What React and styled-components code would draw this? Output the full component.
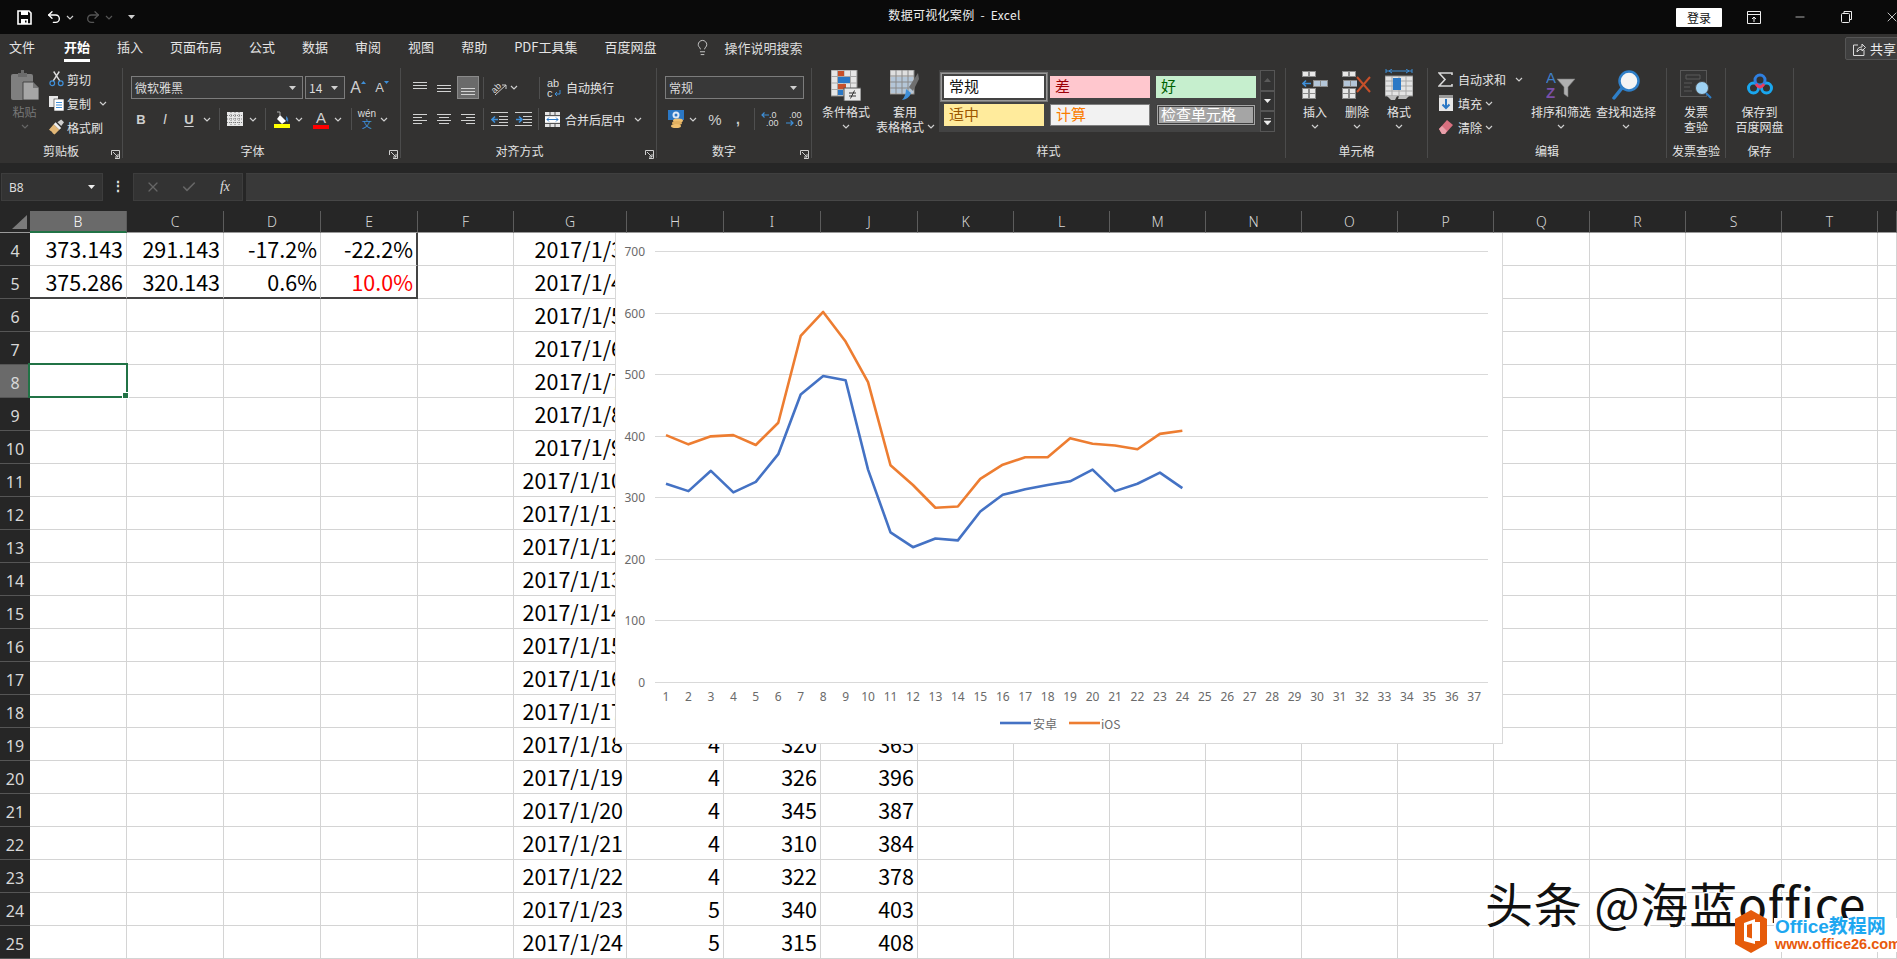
import React from 'react';
import styled, { createGlobalStyle } from 'styled-components';
import { Lightbulb, Undo2, Redo2, Minus, X, Check } from 'lucide-react';

const CJK = '"Noto Sans CJK SC", "Noto Sans", sans-serif';

const GlobalStyle = createGlobalStyle`
  html, body { margin: 0; padding: 0; background: #fff; }
  body { font-family: ${CJK}; overflow: hidden; }
`;

const Page = styled.div`
  position: relative;
  width: 100%;
  height: 959px;
  overflow: hidden;
  background: #262626;
`;

/* title bar */
const TitleBar = styled.div`
  display: grid;
  grid-template-columns: 1fr auto 1fr;
  align-items: center;
  height: 34px;
  background: #0a0a0a;
  color: #eee;
`;
const Row = styled.div`
  display: flex;
  align-items: center;
  height: ${(p) => p.$h || 24}px;
  margin-top: ${(p) => p.$mt || 0}px;
`;
const Tool = styled.div`
  flex: none;
  display: flex;
  align-items: center;
  justify-content: center;
  width: ${(p) => p.$w || 24}px;
  margin-left: ${(p) => p.$ml || 0}px;
  height: 100%;
  color: #d8d8d8;
`;
const Title = styled.div`
  padding: 0 0 6px 12px;
  font-size: 12px;
  letter-spacing: 0.3px;
  white-space: pre;
`;
const WindowControls = styled.div`
  display: flex;
  align-items: center;
  justify-content: flex-end;
  margin-right: -18px;
`;
const SignIn = styled.div`
  width: 46px;
  height: 19px;
  margin-right: 9px;
  background: #fff;
  color: #111;
  border-radius: 1px;
  font-size: 12px;
  line-height: 19px;
  text-align: center;
`;
const WinButton = styled.div`
  width: 46px;
  display: flex;
  justify-content: center;
  color: #eee;
`;

/* tabs */
const TabRow = styled.div`
  display: flex;
  align-items: flex-start;
  gap: 27px;
  height: 32px;
  padding-left: 9px;
  background: #333231;
`;
const Tab = styled.div`
  height: 28px;
  box-sizing: border-box;
  line-height: 26px;
  font-size: 13px;
  color: ${(p) => (p.$active ? '#fff' : '#e4e4e4')};
  font-weight: ${(p) => (p.$active ? 700 : 400)};
  border-bottom: 3px solid ${(p) => (p.$active ? '#fff' : 'transparent')};
  margin-left: ${(p) => p.$ml || 0}px;
  white-space: nowrap;
`;
const TellMe = styled.div`
  display: flex;
  align-items: center;
  gap: 14px;
  height: 26px;
  margin-left: 10px;
  font-size: 13px;
  color: #dcdcdc;
`;
const Share = styled.div`
  display: flex;
  align-items: center;
  gap: 4px;
  position: absolute;
  left: 1845px;
  top: 37px;
  width: 60px;
  height: 23px;
  padding-left: 7px;
  box-sizing: border-box;
  background: #3f3f3f;
  border: 1px solid #555;
  border-radius: 2px;
  font-size: 13px;
  color: #eee;
`;

/* ribbon */
const Ribbon = styled.div`
  display: flex;
  height: 97px;
  box-sizing: border-box;
  padding: 2px 0 5px;
  background: #333231;
`;
const Group = styled.div`
  flex: none;
  display: flex;
  flex-direction: column;
  width: ${(p) => p.$w}px;
  box-sizing: border-box;
  border-right: 1px solid #4b4b4b;
`;
const GroupBody = styled.div`
  flex: 1;
  display: flex;
  padding-left: ${(p) => p.$pl || 0}px;
  min-height: 0;
`;
const GroupLabel = styled.div`
  position: relative;
  height: 14px;
  line-height: 14px;
  margin-bottom: 0;
  font-size: 12px;
  color: #e2e2e2;
  text-align: center;
  padding-right: ${(p) => p.$pr || 0}px;
`;
const LauncherBox = styled.span`
  position: absolute;
  right: 2px;
  top: 6px;
  width: 9px;
  height: 9px;
  display: flex;
`;
const Stack = styled.div`
  flex: none;
  display: flex;
  flex-direction: column;
  width: ${(p) => (p.$w ? `${p.$w}px` : 'auto')};
  margin-left: ${(p) => p.$ml || 0}px;
  margin-top: ${(p) => p.$mt || 0}px;
`;
const SmallRow = styled.div`
  display: flex;
  align-items: center;
  height: 24px;
  margin-left: ${(p) => p.$ml || 0}px;
  font-size: 12px;
  color: #e4e4e4;
  white-space: nowrap;
`;
const SmallIcon = styled.span`
  flex: none;
  display: flex;
  align-items: center;
  justify-content: center;
  width: 15px;
  margin-right: ${(p) => p.$mr || 3}px;
`;
const Spacer = styled.span`
  flex: none;
  width: ${(p) => p.$w}px;
`;
const Large = styled.div`
  flex: none;
  display: flex;
  flex-direction: column;
  align-items: center;
  width: ${(p) => p.$w || 42}px;
  margin-left: ${(p) => p.$ml || 0}px;
  font-size: 12px;
  line-height: 15px;
  color: ${(p) => (p.$dim ? '#777' : '#e4e4e4')};
  white-space: nowrap;
`;
const LargeIcon = styled.div`
  display: flex;
  align-items: center;
  justify-content: center;
  height: 34px;
  margin-bottom: 2px;
`;
const TextLine = styled.div`
  display: flex;
  align-items: center;
  gap: 3px;
  height: 15px;
  margin-left: ${(p) => p.$ml || 0}px;
`;
const Select = styled.div`
  flex: none;
  display: flex;
  align-items: center;
  justify-content: space-between;
  box-sizing: border-box;
  width: ${(p) => p.$w}px;
  height: 23px;
  margin-left: ${(p) => p.$ml || 0}px;
  padding: 0 6px 0 3px;
  background: #383838;
  border: 1px solid #7c7c7c;
  font-size: 12px;
  color: #dcdcdc;
`;
const Sep = styled.span`
  flex: none;
  width: 1px;
  height: 22px;
  margin-left: ${(p) => p.$ml || 0}px;
  background: #4f4f4f;
`;
const Letter = styled.span`
  font-family: "Liberation Sans", sans-serif;
  font-size: ${(p) => p.$size || 13}px;
  font-weight: ${(p) => (p.$bold ? 700 : 400)};
  font-style: ${(p) => (p.$italic ? 'italic' : 'normal')};
  text-decoration: ${(p) => (p.$under ? 'underline' : 'none')};
  text-underline-offset: 2px;
  color: #cfcfcf;
`;
const SizeArrow = styled.svg`
  align-self: flex-start;
  margin-top: 5px;
`;
const ColorLetter = styled.div`
  display: flex;
  flex-direction: column;
  align-items: center;
  width: 16px;
  line-height: 15px;
  &::after {
    content: '';
    width: 16px;
    height: 4px;
    background: ${(p) => p.$bar};
  }
`;
const Phonetic = styled.div`
  display: flex;
  flex-direction: column;
  align-items: center;
  font-size: 10px;
  line-height: 10px;
  color: #ddd;
  font-family: "Liberation Sans", sans-serif;
  b {
    font-weight: 400;
    color: #3f8fd8;
    font-family: ${CJK};
  }
`;
const HighlightBox = styled.div`
  width: 22px;
  height: 23px;
  display: flex;
  align-items: center;
  justify-content: center;
  background: #6a6a6a;
  border: 1px solid #8a8a8a;
  box-sizing: border-box;
  margin-left: 1px;
`;
const Gallery = styled.div`
  flex: none;
  display: flex;
  height: 62px;
  margin: 2px 0 0 4px;
`;
const GalleryCells = styled.div`
  display: grid;
  grid-template-columns: repeat(3, 100px);
  grid-auto-rows: 22px;
  gap: 6px;
  width: 321px;
  box-sizing: border-box;
  padding: 6px 5px;
  background: #434343;
`;
const StyleCell = styled.div`
  box-sizing: border-box;
  padding-left: ${(p) => (p.$check ? 2 : 5)}px;
  font-size: 15px;
  line-height: ${(p) => (p.$check ? 14 : p.$border ? 18 : 19)}px;
  background: ${(p) => p.$bg};
  color: ${(p) => p.$fg};
  border: ${(p) => p.$border || 'none'};
  box-shadow: ${(p) => (p.$picked ? '0 0 0 2px #434343, 0 0 0 3px #999, 0 0 0 4px #777' : 'none')};
  overflow: hidden;
  white-space: nowrap;
`;
const GalleryScroll = styled.div`
  display: flex;
  flex-direction: column;
  width: 15px;
`;
const ScrollButton = styled.div`
  flex: ${(p) => p.$flex || 1};
  display: flex;
  align-items: center;
  justify-content: center;
  background: #333;
  border: 1px solid #565656;
  box-sizing: border-box;
`;

/* formula bar */
const FormulaBar = styled.div`
  display: flex;
  height: 38px;
  box-sizing: border-box;
  padding: 10px 0 0 1px;
  background: #262626;
`;
const NameBox = styled.div`
  display: flex;
  align-items: center;
  justify-content: space-between;
  width: 102px;
  box-sizing: border-box;
  padding: 0 7px;
  background: #333;
  border: 1px solid #3d3d3d;
  font-size: 12px;
  color: #ddd;
  font-family: "Noto Sans", sans-serif;
`;
const Dots = styled.div`
  width: 30px;
  text-align: center;
  color: #ddd;
  font-size: 14px;
  font-weight: 700;
  line-height: 25px;
`;
const FxBox = styled.div`
  display: flex;
  align-items: center;
  width: 110px;
  box-sizing: border-box;
  background: #333;
  border: 1px solid #3d3d3d;
`;
const FxLabel = styled.span`
  font-family: "Liberation Serif", serif;
  font-style: italic;
  font-size: 14px;
  color: #ddd;
`;
const FormulaInput = styled.div`
  flex: 1;
  margin-left: 3px;
  background: #393939;
  border-top: 1px solid #3f3f3f;
  border-bottom: 1px solid #474747;
`;

/* sheet */
const Sheet = styled.div`
  position: relative;
  display: grid;
  grid-template-columns: 30px repeat(4, 97px) 96px 113px repeat(3, 97px) repeat(10, 96px) 19px;
  grid-template-rows: 32px;
  grid-auto-rows: 33px;
`;
const Corner = styled.div`
  display: flex;
  align-items: flex-end;
  justify-content: flex-end;
  box-sizing: border-box;
  padding: 0 3px 3px 0;
  background: #262626;
  border-bottom: 1px solid #9a9a9a;
`;
const ColHead = styled.div`
  box-sizing: border-box;
  margin-top: 10px;
  height: 22px;
  line-height: 21px;
  text-align: center;
  font-size: 14px;
  font-family: "Noto Sans", sans-serif;
  font-weight: 300;
  color: ${(p) => (p.$active ? '#fff' : '#d8d8d8')};
  background: ${(p) => (p.$active ? '#6a6a6a' : '#262626')};
  border-right: 1px solid #5c5c5c;
  border-bottom: ${(p) => (p.$active ? '2px solid #217346' : '1px solid #9a9a9a')};
`;
const RowHead = styled.div`
  box-sizing: border-box;
  text-align: center;
  padding-top: 5px;
  font-size: 16px;
  line-height: 26px;
  font-family: "Noto Sans", sans-serif;
  color: #d8d8d8;
  background: ${(p) => (p.$active ? '#6a6a6a' : '#262626')};
  border-bottom: 1px solid #555;
`;
const Cell = styled.div`
  position: relative;
  box-sizing: border-box;
  overflow: hidden;
  padding: 0 3px 0 0;
  text-align: right;
  white-space: nowrap;
  font-size: 21.5px;
  line-height: 32px;
  color: ${(p) => (p.$red ? '#ff0000' : '#000')};
  background: #fff;
  border-right: ${(p) => (p.$edgeR ? '2px solid #444' : '1px solid #d4d4d4')};
  border-bottom: ${(p) => (p.$edgeB ? '2px solid #444' : '1px solid #d4d4d4')};
`;
const Selection = styled.div`
  position: relative;
  z-index: 2;
  margin: -2px -1px 0 -2px;
  box-sizing: border-box;
  border: 2px solid #217346;
  background: #fff;
  &::after {
    content: '';
    position: absolute;
    right: -3px;
    bottom: -3px;
    width: 5px;
    height: 5px;
    background: #217346;
    border: 1px solid #fff;
  }
`;

/* floating chart */
const ChartBox = styled.div`
  position: absolute;
  left: 615px;
  top: 32px;
  width: 888px;
  height: 511px;
  box-sizing: border-box;
  background: #fff;
  border: 1px solid #d9d9d9;
  border-top: none;
  z-index: 3;
  svg { display: block; }
`;
const AxisText = styled.text`
  font-family: "Noto Sans", sans-serif;
  font-size: 12px;
  fill: #6a6a6a;
`;
const LegendText = styled.text`
  font-family: ${CJK};
  font-size: 12px;
  fill: #6a6a6a;
`;

/* watermark */
const WatermarkText = styled.div`
  position: absolute;
  left: 1485px;
  top: 874px;
  z-index: 4;
  font-size: 48px;
  line-height: 56px;
  letter-spacing: 0.8px;
  white-space: nowrap;
  color: #111;
  text-shadow: 2px 2px 0 #fff, -1px -1px 0 #fff;
`;
const Badge = styled.div`
  position: absolute;
  left: 1735px;
  top: 910px;
  z-index: 5;
  display: flex;
  gap: 7px;
`;
const BadgeText = styled.div`
  display: flex;
  flex-direction: column;
  font-family: "Liberation Sans", ${CJK};
  font-weight: 700;
  white-space: nowrap;
  background: #fff;
  margin-top: 8px;
  padding-left: 1px;
  height: 34px;
`;
const BadgeTop = styled.span`
  font-size: 19px;
  line-height: 18px;
  color: #1ea7f0;
`;
const BadgeBottom = styled.span`
  font-size: 14.5px;
  line-height: 16px;
  color: #e8590c;
`;

/* ---------- icons ---------- */
const Chev = ({ c = '#cfcfcf' }) => (
  <svg width="8" height="5" viewBox="0 0 8 5"><path d="M1 1l3 3 3-3" fill="none" stroke={c} strokeWidth="1.2" /></svg>
);
const Caret = ({ c = '#cfcfcf' }) => (
  <svg width="7" height="4" viewBox="0 0 7 4"><path d="M0 0h7L3.500 4z" fill={c} /></svg>
);
const Launcher = () => (
  <LauncherBox>
    <svg width="9" height="9" viewBox="0 0 9 9" fill="none" stroke="#cfcfcf">
      <path d="M.5 5V.5h8v8H4" />
      <path d="M2 2l5 5M7 4v3H4" />
    </svg>
  </LauncherBox>
);
const SaveIcon = () => (
  <svg width="15" height="15" viewBox="0 0 15 15">
    <path d="M1 1h11l2 2v11H1z" fill="none" stroke="#fff" strokeWidth="1.6" />
    <path d="M4 1h7v4H4zM4 9h7v5H4z" fill="#fff" />
    <path d="M8 10.500h1.500v2H8z" fill="#0a0a0a" />
  </svg>
);
const PasteIcon = () => (
  <svg width="28" height="30" viewBox="0 0 28 30">
    <rect x="0" y="4" width="22" height="26" rx="2" fill="#7f7f7f" />
    <path d="M7 3h3V0h3v3h3v4H7z" fill="#6b6b6b" />
    <path d="M12 12h10l6 6v12H12z" fill="#a6a6a6" stroke="#444" />
    <path d="M22 12v6h6" fill="#777" />
  </svg>
);
const Scissors = () => (
  <svg width="16" height="16" viewBox="0 0 16 16" fill="none">
    <path d="M4.500 10L11 0M11.500 10L5 0" stroke="#ddd" strokeWidth="1.5" />
    <circle cx="3.500" cy="12.500" r="2.500" stroke="#3f8fd8" strokeWidth="1.3" />
    <circle cx="12.500" cy="12.500" r="2.500" stroke="#3f8fd8" strokeWidth="1.3" />
  </svg>
);
const CopyIcon = () => (
  <svg width="15" height="15" viewBox="0 0 15 15">
    <rect x="0" y="0" width="9" height="11" fill="#e8e8e8" />
    <rect x="5" y="3" width="10" height="12" fill="#fff" stroke="#333" strokeWidth=".6" />
    <path d="M7 6.500h6M7 9h6M7 11.500h6" stroke="#3f8fd8" />
  </svg>
);
const BrushIcon = () => (
  <svg width="16" height="16" viewBox="0 0 16 16">
    <path d="M0 11l5-6 6 6-5 5q-2-1-3-3z" fill="#e2b777" />
    <path d="M5 5l2-2 6 6-2 2z" fill="#f1f1f1" />
    <path d="M9 3l4-3 3 3-3 4z" fill="#cfcfcf" />
  </svg>
);
const BorderIcon = () => (
  <svg width="16" height="14" viewBox="0 0 16 14">
    <rect width="16" height="14" fill="#e8e8e8" />
    <path d="M0 3.500h16M0 7h16M0 10.500h16M4 0v14M8 0v14M12 0v14" stroke="#555" strokeWidth=".7" strokeDasharray="1 1" />
  </svg>
);
const FillIcon = () => (
  <svg width="16" height="17" viewBox="0 0 16 17">
    <path d="M6 4l6 6-4 3-5-5z" fill="#fff" />
    <path d="M6 4V1H3" fill="none" stroke="#aaa" />
    <path d="M12 5q3 2 2 6l-2-2z" fill="#3f7fc0" />
    <rect y="13" width="16" height="4" fill="#ffff00" />
  </svg>
);
const Lines = ({ rows }) => (
  <svg width="16" height="16" viewBox="0 0 16 16" stroke="#d2d2d2" fill="none">
    {rows.map(([x, y, w]) => <path key={`${x}${y}`} d={`M${x} ${y}.5h${w}`} />)}
  </svg>
);
const OrientIcon = () => (
  <svg width="18" height="16" viewBox="0 0 18 16">
    <text x="1" y="11" transform="rotate(-45 6 8)" fontFamily="Liberation Sans" fontSize="9" fill="#ddd">ab</text>
    <path d="M5 15L16 5M12 5h4v4" stroke="#ccc" fill="none" />
  </svg>
);
const WrapIcon = () => (
  <svg width="14" height="20" viewBox="0 0 14 20">
    <text x="0" y="9" fontFamily="Liberation Sans" fontSize="11" fill="#ddd">ab</text>
    <text x="0" y="19" fontFamily="Liberation Sans" fontSize="11" fill="#ddd">c</text>
    <path d="M13 12v4H8M10 14l-2 2 2 2" stroke="#3f8fd8" fill="none" />
  </svg>
);
const MergeIcon = () => (
  <svg width="15" height="15" viewBox="0 0 15 15">
    <rect width="15" height="15" fill="#e4e4e4" />
    <rect y="5" width="15" height="5" fill="#fff" />
    <path d="M0 3.500h15M0 11.500h15M5 0v3M10 0v3M5 12v3M10 12v3" stroke="#555" />
    <path d="M2 7.500h11M4 5.500l-2 2 2 2M11 5.500l2 2-2 2" stroke="#2b78c5" fill="none" />
  </svg>
);
const IndentIcon = ({ flip }) => (
  <svg width="17" height="14" viewBox="0 0 17 14" fill="none">
    <path d="M0 .5h17M8 4.500h9M8 7.500h9M8 10.500h9M0 13.500h17" stroke="#cfcfcf" />
    <path d={flip ? 'M1 7.500h6M4 4.500l3 3-3 3' : 'M7 7.500H1M4 4.500l-3 3 3 3'} stroke="#3f8fd8" strokeWidth="1.6" />
  </svg>
);
const CurrencyIcon = () => (
  <svg width="17" height="18" viewBox="0 0 17 18">
    <rect width="16" height="10" fill="#2b78c5" />
    <ellipse cx="8" cy="5" rx="3.500" ry="3.500" fill="#dfe9f5" />
    <circle cx="8" cy="5" r="1.500" fill="#2b78c5" />
    <ellipse cx="10" cy="10.500" rx="5" ry="2" fill="#f0c070" />
    <ellipse cx="9" cy="13" rx="5" ry="2" fill="#e2b060" />
    <ellipse cx="8" cy="16" rx="5" ry="2" fill="#f0c070" />
  </svg>
);
const DecimalIcon = ({ top, bottom, dir }) => (
  <svg width="20" height="16" viewBox="0 0 20 16">
    <text x={dir === 'l' ? 8 : 4} y="7" fontFamily="Liberation Sans" fontSize="9" fill="#ddd">{top}</text>
    <text x={dir === 'l' ? 5 : 10} y="15" fontFamily="Liberation Sans" fontSize="9" fill="#ddd">{bottom}</text>
    {dir === 'l'
      ? <path d="M8 4H1M3.500 1.500L1 4l2.500 2.500" stroke="#3f8fd8" fill="none" strokeWidth="1.2" />
      : <path d="M1 12h7M5.500 9.500L8 12l-2.500 2.500" stroke="#3f8fd8" fill="none" strokeWidth="1.2" />}
  </svg>
);
const CondIcon = () => (
  <svg width="30" height="31" viewBox="0 0 30 31">
    <rect width="26" height="26" fill="#e6e6e6" stroke="#8a8a8a" />
    <path d="M6.500 0v26M13 0v26M19.500 0v26M0 6.500h26M0 13h26M0 19.500h26" stroke="#a8a8a8" />
    <rect x="7" y="1" width="6" height="5" fill="#c8502a" />
    <rect x="7" y="7" width="12" height="6" fill="#2b78c5" />
    <rect x="7" y="14" width="8" height="5" fill="#c8502a" />
    <rect x="7" y="20" width="5" height="5" fill="#2b78c5" />
    <rect x="13" y="18" width="17" height="13" fill="#e8e8e8" stroke="#555" />
    <path d="M18 23h7M18 26h7M23.500 20.500l-4 8" stroke="#333" />
  </svg>
);
const TableIcon = () => (
  <svg width="30" height="31" viewBox="0 0 30 31">
    <rect width="24" height="24" fill="#dfdfdf" stroke="#8a8a8a" />
    <rect x="1" y="7" width="22" height="16" fill="#b4c6d8" />
    <path d="M6 0v24M12 0v24M18 0v24M0 6h24M0 12h24M0 18h24" stroke="#8a8a8a" />
    <path d="M29 9l-1-6-9 14 4 4z" fill="#6f6f6f" />
    <path d="M16 19l5 4q-2 6-9 7 4-4 4-11z" fill="#3f8fd8" />
  </svg>
);
const Block = ({ x, y, c = '#e8e8e8' }) => (
  <g>
    <rect x={x} y={y} width="14" height="11" fill="#8a8a8a" />
    <path d={`M${x + 1} ${y + 1}h5v4h-5zM${x + 8} ${y + 1}h5v4h-5zM${x + 1} ${y + 6}h5v4h-5zM${x + 8} ${y + 6}h5v4h-5z`} fill={c} />
  </g>
);
const InsertIcon = () => (
  <svg width="26" height="28" viewBox="0 0 26 28">
    <rect x="0" y="0" width="14" height="6" fill="#8a8a8a" />
    <path d="M1 1h5v4H1zM8 1h5v4H8z" fill="#e8e8e8" />
    <rect x="11" y="9" width="15" height="7" fill="#8a8a8a" />
    <path d="M12 10h6v5h-6zM19 10h6v5h-6z" fill="#b4c6d8" />
    <path d="M9 12.500H1M4 9.500l-3 3 3 3" stroke="#3f8fd8" strokeWidth="1.6" fill="none" />
    <Block x={0} y={17} />
  </svg>
);
const DeleteIcon = () => (
  <svg width="30" height="28" viewBox="0 0 30 28">
    <rect x="0" y="0" width="14" height="6" fill="#8a8a8a" />
    <path d="M1 1h5v4H1zM8 1h5v4H8z" fill="#e8e8e8" />
    <rect x="1" y="9" width="14" height="7" fill="#8a8a8a" />
    <path d="M2 10h6v5H2zM9 10h6v5H9z" fill="#b4c6d8" />
    <Block x={0} y={17} />
    <path d="M15 6l13 15M28 6L15 21" stroke="#c8502a" strokeWidth="2" />
  </svg>
);
const FormatIcon = () => (
  <svg width="28" height="32" viewBox="0 0 28 32">
    <path d="M1 2h26M1 0v4M27 0v4M4 2l3-2M4 2l3 2M24 2l-3-2M24 2l-3 2" stroke="#3f8fd8" fill="none" />
    <rect y="7" width="28" height="20" fill="#e4e4e4" stroke="#8a8a8a" />
    <path d="M7 7v20M14 7v20M21 7v20M0 12h28M0 17h28M0 22h28" stroke="#a8a8a8" />
    <rect x="8" y="9" width="8" height="12" fill="#2b78c5" />
    <path d="M2 27h10l-2 4H6zM14 27h10l-3 3h-8z" fill="#bdbdbd" />
  </svg>
);
const SigmaIcon = () => (
  <svg width="15" height="15" viewBox="0 0 15 15"><path d="M14 3V1H1l6 6.500L1 14h13v-2" fill="none" stroke="#d8d8d8" strokeWidth="1.6" /></svg>
);
const DownIcon = () => (
  <svg width="14" height="16" viewBox="0 0 14 16">
    <rect width="14" height="16" fill="#e8e8e8" />
    <rect width="14" height="3" fill="#9a9a9a" />
    <path d="M7 4v9M3.500 9.500L7 13l3.500-3.500" stroke="#2b78c5" strokeWidth="2" fill="none" />
  </svg>
);
const EraserIcon = () => (
  <svg width="14" height="14" viewBox="0 0 14 14">
    <path d="M0 9l8-9 6 5-8 9H3z" fill="#d9707f" />
    <path d="M0 9l3-3 5 5-2 3H3z" fill="#e9a0aa" />
  </svg>
);
const SortIcon = () => (
  <svg width="30" height="28" viewBox="0 0 30 28">
    <text x="0" y="12" fontFamily="Liberation Sans" fontSize="15" fill="#3f7fc8">A</text>
    <text x="0" y="27" fontFamily="Liberation Sans" fontSize="15" fontWeight="700" fill="#7a4fa8">Z</text>
    <path d="M11 8h18l-7 8v10l-4-3v-7z" fill="#b0b0b0" stroke="#777" strokeWidth=".6" />
  </svg>
);
const FindIcon = () => (
  <svg width="28" height="30" viewBox="0 0 28 30">
    <circle cx="17" cy="11" r="9.500" fill="#f4f4f4" stroke="#2f7fc8" strokeWidth="2.500" />
    <path d="M10 18L2 28" stroke="#2f7fc8" strokeWidth="3.500" strokeLinecap="round" />
  </svg>
);
const InvoiceIcon = () => (
  <svg width="32" height="30" viewBox="0 0 32 30">
    <rect x="0.500" y="0.500" width="26" height="26" fill="#353535" stroke="#585858" />
    <path d="M6 5h14v4H6zM4 13h8M4 17h6M4 21h8" stroke="#5a5a5a" fill="none" />
    <circle cx="22" cy="18" r="6.500" fill="#9ed2f4" stroke="#4a4a4a" />
    <path d="M26 23l5 5" stroke="#2f7fc8" strokeWidth="2" />
  </svg>
);
const CloudIcon = () => (
  <svg width="26" height="24" viewBox="0 0 26 24" fill="none" strokeWidth="3">
    <circle cx="6.500" cy="15" r="5" stroke="#19a7ef" />
    <circle cx="19.500" cy="15" r="5" stroke="#19a7ef" />
    <circle cx="13" cy="7" r="5" stroke="#2f7fe0" />
    <path d="M9 11q4 6 8 0" stroke="#ee3b5f" />
  </svg>
);
const ShareIcon = () => (
  <svg width="13" height="14" viewBox="0 0 13 14" fill="none" stroke="#ddd">
    <path d="M5 3H.5v10.500H11V8" />
    <path d="M4 10q0-5 5-5V2l3.500 3.500L9 9V7q-3 0-5 3z" />
  </svg>
);
const RibbonDisplay = () => (
  <svg width="14" height="13" viewBox="0 0 14 13" fill="none" stroke="#eee">
    <path d="M.5.500h13v12H.5zM.5 3.500h13M7 11V6M5 8l2-2 2 2" />
  </svg>
);
const Restore = () => (
  <svg width="11" height="12" viewBox="0 0 11 12" fill="none" stroke="#eee">
    <rect x=".5" y="2.500" width="8" height="9" rx="1" />
    <path d="M3 2.500V.5h7.500v8H8.500" />
  </svg>
);
const OfficeLogo = () => (
  <svg width="32" height="43" viewBox="0 0 32 43">
    <path d="M16 0l16 9v25l-16 9L0 34V9z" fill="#e65b0a" />
    <path d="M9 13l11-4v25L9 31zM20 12h5v19h-5" fill="#fff" />
    <path d="M12 15l5-1.500v15L12 27z" fill="#e65b0a" />
  </svg>
);
const Triangle = () => (
  <svg width="15" height="14" viewBox="0 0 15 14"><path d="M15 0v14H0z" fill="#7a7a7a" /></svg>
);

/* ---------- data ---------- */
const android = [322, 310, 343, 308, 325, 370, 467, 497, 490, 345, 243, 219, 233, 230, 277, 304, 313, 320, 326, 345, 310, 322, 340, 315];
const ios = [401, 386, 399, 401, 385, 421, 562, 601, 553, 487, 352, 320, 283, 285, 330, 353, 365, 365, 396, 387, 384, 378, 403, 408];

const columns = 'BCDEFGHIJKLMNOPQRSTU'.split('');
const rows = Array.from({ length: 22 }, (_, i) => i + 4);
const summary = {
  4: { B: '373.143', C: '291.143', D: '-17.2%', E: '-22.2%' },
  5: { B: '375.286', C: '320.143', D: '0.6%', E: '10.0%' },
};
const tabs = ['开始', '插入', '页面布局', '公式', '数据', '审阅', '视图', '帮助', 'PDF工具集', '百度网盘'];

const cellText = (row, col) => {
  const day = row - 1;
  if (summary[row] && summary[row][col]) return summary[row][col];
  if (col === 'G') return `2017/1/${day}`;
  if (col === 'H') return Math.floor((day - 2) / 7) + 2;
  if (col === 'I') return android[day - 1];
  if (col === 'J') return ios[day - 1];
  return '';
};

const yFor = (v) => 449 - v * 0.6157;
const xFor = (i) => 50 + i * 22.45;
const toPoints = (list) => list.map((v, i) => `${xFor(i)},${yFor(v)}`).join(' ');

const LineChart = () => (
  <ChartBox>
    <svg width="888" height="510" viewBox="0 0 888 510">
      {[0, 100, 200, 300, 400, 500, 600, 700].map((v) => (
        <g key={v}>
          <path d={`M39 ${Math.round(yFor(v)) + 0.5}H872`} stroke="#d9d9d9" />
          <AxisText x="29" y={yFor(v) + 5} textAnchor="end">{v}</AxisText>
        </g>
      ))}
      {Array.from({ length: 37 }, (_, i) => (
        <AxisText key={i} x={xFor(i)} y="468" textAnchor="middle">{i + 1}</AxisText>
      ))}
      <polyline points={toPoints(android)} fill="none" stroke="#4472c4" strokeWidth="2.6" strokeLinejoin="round" />
      <polyline points={toPoints(ios)} fill="none" stroke="#ed7d31" strokeWidth="2.6" strokeLinejoin="round" />
      <path d="M384 490h31" stroke="#4472c4" strokeWidth="2.6" />
      <LegendText x="417" y="496">安卓</LegendText>
      <path d="M453 490h31" stroke="#ed7d31" strokeWidth="2.6" />
      <LegendText x="485" y="496">iOS</LegendText>
    </svg>
  </ChartBox>
);

const App = () => (
  <Page>
    <GlobalStyle />
    <TitleBar>
      <Row $h={34}>
        <Tool $w={15} $ml={17}><SaveIcon /></Tool>
        <Tool $w={18} $ml={13}><Undo2 size={16} color="#fff" strokeWidth={2} /></Tool>
        <Tool $w={8} $ml={3}><Chev /></Tool>
        <Tool $w={18} $ml={10}><Redo2 size={16} color="#555" strokeWidth={2} /></Tool>
        <Tool $w={8} $ml={3}><Chev c="#555" /></Tool>
        <Tool $w={8} $ml={14}><Caret /></Tool>
      </Row>
      <Title>数据可视化案例  -  Excel</Title>
      <WindowControls>
        <SignIn>登录</SignIn>
        <WinButton><RibbonDisplay /></WinButton>
        <WinButton><Minus size={14} strokeWidth={1.2} /></WinButton>
        <WinButton><Restore /></WinButton>
        <WinButton><X size={16} strokeWidth={1.2} /></WinButton>
      </WindowControls>
    </TitleBar>

    <TabRow>
      <Tab>文件</Tab>
      {tabs.map((t, i) => <Tab key={t} $active={i === 0} $ml={i === 0 ? 2 : 0}>{t}</Tab>)}
      <TellMe><Lightbulb size={17} strokeWidth={1.2} color="#ddd" />操作说明搜索</TellMe>
      <Share><ShareIcon />共享</Share>
    </TabRow>

    <Ribbon>
      <Group $w={123}>
        <GroupBody>
          <Large $w={49} $dim>
            <LargeIcon><PasteIcon /></LargeIcon>
            <TextLine>粘贴</TextLine>
            <TextLine><Chev c="#666" /></TextLine>
          </Large>
          <Stack $w={70} $mt={-1}>
            <SmallRow><SmallIcon><Scissors /></SmallIcon>剪切</SmallRow>
            <SmallRow><SmallIcon><CopyIcon /></SmallIcon>复制<Spacer $w={8} /><Chev /></SmallRow>
            <SmallRow><SmallIcon><BrushIcon /></SmallIcon>格式刷</SmallRow>
          </Stack>
        </GroupBody>
        <GroupLabel>剪贴板<Launcher /></GroupLabel>
      </Group>

      <Group $w={278}>
        <GroupBody $pl={8}>
          <Stack $mt={8}>
            <Row $h={23}>
              <Select $w={172}>微软雅黑<Caret /></Select>
              <Select $w={40} $ml={2}>14<Caret /></Select>
              <Tool $w={20} $ml={3}><Letter $size={16}>A</Letter><SizeArrow width="5" height="3" viewBox="0 0 5 3"><path d="M0 3h5L2.500 0z" fill="#3f8fd8" /></SizeArrow></Tool>
              <Tool $w={20} $ml={4}><Letter $size={13}>A</Letter><SizeArrow width="5" height="3" viewBox="0 0 5 3"><path d="M0 0h5L2.500 3z" fill="#3f8fd8" /></SizeArrow></Tool>
            </Row>
            <Row $h={22} $mt={9}>
              <Tool $w={24} $ml={-2}><Letter $bold>B</Letter></Tool>
              <Tool $w={24}><Letter $italic $size={14}>I</Letter></Tool>
              <Tool $w={24}><Letter $bold $under>U</Letter></Tool>
              <Tool $w={8} $ml={2}><Chev /></Tool>
              <Sep $ml={8} />
              <Tool $w={16} $ml={7}><BorderIcon /></Tool>
              <Tool $w={8} $ml={6}><Chev /></Tool>
              <Sep $ml={8} />
              <Tool $w={22} $ml={5}><FillIcon /></Tool>
              <Tool $w={8} $ml={2}><Chev /></Tool>
              <Tool $w={22} $ml={7}><ColorLetter $bar="#ff0000"><Letter $size={15}>A</Letter></ColorLetter></Tool>
              <Tool $w={8} $ml={2}><Chev /></Tool>
              <Sep $ml={9} />
              <Tool $w={24} $ml={3}><Phonetic>wén<b>文</b></Phonetic></Tool>
              <Tool $w={8} $ml={1}><Chev /></Tool>
            </Row>
          </Stack>
        </GroupBody>
        <GroupLabel $pr={18}>字体<Launcher /></GroupLabel>
      </Group>

      <Group $w={256}>
        <GroupBody $pl={7}>
          <Stack $mt={8}>
            <Row $h={23}>
              <Tool $w={24}><Lines rows={[[1, 2, 14], [1, 5, 14], [1, 8, 14]]} /></Tool>
              <Tool $w={24}><Lines rows={[[1, 5, 14], [1, 8, 14], [1, 11, 14]]} /></Tool>
              <HighlightBox><Lines rows={[[1, 8, 14], [1, 11, 14], [1, 14, 14]]} /></HighlightBox>
              <Sep $ml={4} />
              <Tool $w={22} $ml={4}><OrientIcon /></Tool>
              <Tool $w={8}><Chev /></Tool>
              <Sep $ml={21} />
              <Tool $w={14} $ml={7}><WrapIcon /></Tool>
              <SmallRow $ml={5}>自动换行</SmallRow>
            </Row>
            <Row $h={22} $mt={9}>
              <Tool $w={24}><Lines rows={[[1, 3, 14], [1, 6, 9], [1, 9, 14], [1, 12, 9]]} /></Tool>
              <Tool $w={24}><Lines rows={[[1, 3, 14], [3, 6, 10], [1, 9, 14], [3, 12, 10]]} /></Tool>
              <Tool $w={24}><Lines rows={[[1, 3, 14], [6, 6, 9], [1, 9, 14], [6, 12, 9]]} /></Tool>
              <Sep $ml={3} />
              <Tool $w={22} $ml={4}><IndentIcon /></Tool>
              <Tool $w={22} $ml={2}><IndentIcon flip /></Tool>
              <Sep $ml={4} />
              <Tool $w={15} $ml={6}><MergeIcon /></Tool>
              <SmallRow $ml={5}>合并后居中<Spacer $w={9} /><Chev /></SmallRow>
            </Row>
          </Stack>
        </GroupBody>
        <GroupLabel $pr={18}>对齐方式<Launcher /></GroupLabel>
      </Group>

      <Group $w={155}>
        <GroupBody $pl={8}>
          <Stack $mt={8}>
            <Row $h={23}>
              <Select $w={139}>常规<Caret /></Select>
            </Row>
            <Row $h={22} $mt={9}>
              <Tool $w={22}><CurrencyIcon /></Tool>
              <Tool $w={8} $ml={2}><Chev /></Tool>
              <Tool $w={24} $ml={6}><Letter $size={15}>%</Letter></Tool>
              <Tool $w={22}><Letter $bold $size={14}>,</Letter></Tool>
              <Sep $ml={5} />
              <Tool $w={24} $ml={4}><DecimalIcon top=".0" bottom=".00" dir="l" /></Tool>
              <Tool $w={24}><DecimalIcon top=".00" bottom=".0" dir="r" /></Tool>
            </Row>
          </Stack>
        </GroupBody>
        <GroupLabel $pr={20}>数字<Launcher /></GroupLabel>
      </Group>

      <Group $w={474}>
        <GroupBody $pl={4}>
          <Large $w={60}>
            <LargeIcon><CondIcon /></LargeIcon>
            <TextLine>条件格式</TextLine>
            <TextLine><Chev /></TextLine>
          </Large>
          <Large $w={60} $ml={-1}>
            <LargeIcon><TableIcon /></LargeIcon>
            <TextLine>套用</TextLine>
            <TextLine $ml={1}>表格格式<Chev /></TextLine>
          </Large>
          <Gallery>
            <GalleryCells>
              <StyleCell $bg="#fff" $fg="#111" $picked>常规</StyleCell>
              <StyleCell $bg="#ffc7ce" $fg="#9c0006">差</StyleCell>
              <StyleCell $bg="#c6efce" $fg="#006100">好</StyleCell>
              <StyleCell $bg="#ffeb9c" $fg="#9c5700">适中</StyleCell>
              <StyleCell $bg="#f2f2f2" $fg="#fa7d00" $border="1px solid #7f7f7f">计算</StyleCell>
              <StyleCell $bg="#a5a5a5" $fg="#fff" $border="3px double #3f3f3f" $check>检查单元格</StyleCell>
            </GalleryCells>
            <GalleryScroll>
              <ScrollButton><svg width="7" height="4" viewBox="0 0 7 4"><path d="M0 4h7L3.500 0z" fill="#5a5a5a" /></svg></ScrollButton>
              <ScrollButton><Caret c="#eee" /></ScrollButton>
              <ScrollButton><svg width="7" height="7" viewBox="0 0 7 7"><path d="M0 .5h7M0 3h7L3.500 7z" stroke="#eee" strokeWidth=".6" fill="#eee" /></svg></ScrollButton>
            </GalleryScroll>
          </Gallery>
        </GroupBody>
        <GroupLabel>样式</GroupLabel>
      </Group>

      <Group $w={142}>
        <GroupBody $pl={8}>
          <Large><LargeIcon><InsertIcon /></LargeIcon><TextLine>插入</TextLine><TextLine><Chev /></TextLine></Large>
          <Large><LargeIcon><DeleteIcon /></LargeIcon><TextLine>删除</TextLine><TextLine><Chev /></TextLine></Large>
          <Large><LargeIcon><FormatIcon /></LargeIcon><TextLine>格式</TextLine><TextLine><Chev /></TextLine></Large>
        </GroupBody>
        <GroupLabel>单元格</GroupLabel>
      </Group>

      <Group $w={239}>
        <GroupBody $pl={10}>
          <Stack $w={92} $mt={-1}>
            <SmallRow><SmallIcon $mr={5}><SigmaIcon /></SmallIcon>自动求和<Spacer $w={9} /><Chev /></SmallRow>
            <SmallRow><SmallIcon $mr={5}><DownIcon /></SmallIcon>填充<Spacer $w={3} /><Chev /></SmallRow>
            <SmallRow><SmallIcon $mr={5}><EraserIcon /></SmallIcon>清除<Spacer $w={3} /><Chev /></SmallRow>
          </Stack>
          <Large $w={62}><LargeIcon><SortIcon /></LargeIcon><TextLine>排序和筛选</TextLine><TextLine><Chev /></TextLine></Large>
          <Large $w={62} $ml={3}><LargeIcon><FindIcon /></LargeIcon><TextLine>查找和选择</TextLine><TextLine><Chev /></TextLine></Large>
        </GroupBody>
        <GroupLabel>编辑</GroupLabel>
      </Group>

      <Group $w={59}>
        <GroupBody>
          <Large $w={58}><LargeIcon><InvoiceIcon /></LargeIcon><TextLine>发票</TextLine><TextLine>查验</TextLine></Large>
        </GroupBody>
        <GroupLabel>发票查验</GroupLabel>
      </Group>

      <Group $w={68}>
        <GroupBody>
          <Large $w={67}><LargeIcon><CloudIcon /></LargeIcon><TextLine>保存到</TextLine><TextLine>百度网盘</TextLine></Large>
        </GroupBody>
        <GroupLabel>保存</GroupLabel>
      </Group>
    </Ribbon>

    <FormulaBar>
      <NameBox>B8<Caret c="#eee" /></NameBox>
      <Dots>⋮</Dots>
      <FxBox>
        <Tool $w={20} $ml={9}><X size={16} color="#666" strokeWidth={1.8} /></Tool>
        <Tool $w={20} $ml={16}><Check size={16} color="#666" strokeWidth={2.4} /></Tool>
        <Tool $w={20} $ml={16}><FxLabel>fx</FxLabel></Tool>
      </FxBox>
      <FormulaInput />
    </FormulaBar>

    <Sheet>
      <Corner><Triangle /></Corner>
      {columns.map((c) => <ColHead key={c} $active={c === 'B'}>{c === 'U' ? '' : c}</ColHead>)}
      {rows.map((r) => (
        <React.Fragment key={r}>
          <RowHead $active={r === 8}>{r}</RowHead>
          {columns.map((c) => {
            if (r === 8 && c === 'B') return <Selection key={c} />;
            return (
              <Cell
                key={c}
                $red={r === 5 && c === 'E'}
                $edgeR={r < 6 && c === 'E'}
                $edgeB={r === 5 && 'BCDE'.includes(c)}
              >
                {cellText(r, c)}
              </Cell>
            );
          })}
        </React.Fragment>
      ))}
      <LineChart />
    </Sheet>

    <WatermarkText>头条 @海蓝office</WatermarkText>
    <Badge>
      <OfficeLogo />
      <BadgeText>
        <BadgeTop>Office教程网</BadgeTop>
        <BadgeBottom>www.office26.com</BadgeBottom>
      </BadgeText>
    </Badge>
  </Page>
);

export default App;
